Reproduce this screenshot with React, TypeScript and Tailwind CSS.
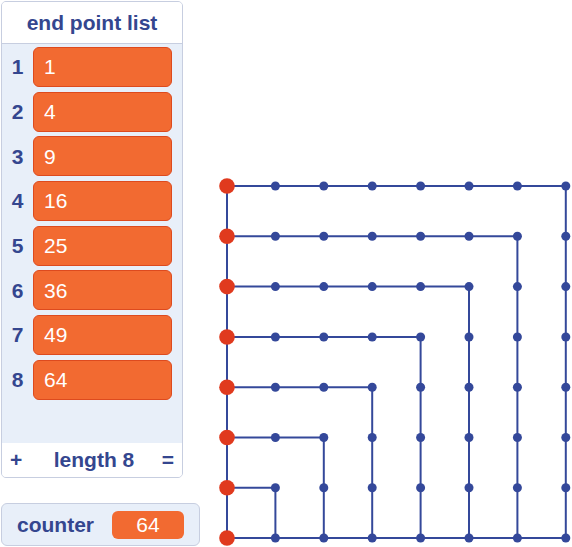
import React from "react";

const values = [1, 4, 9, 16, 25, 36, 49, 64];

// grid coordinates of the end-point diagram (page pixels)
const xs = [227, 275.4, 323.8, 372.2, 420.6, 469, 517.4, 565.8];
const ys = [186, 236.3, 286.6, 337, 387.2, 437.5, 487.8, 538];

function EndPointGrid() {
  const n = xs.length;
  return (
    <svg className="block" width="370" height="547" viewBox="202 0 370 547">
      {/* left spine and bottom edge */}
      <line x1={xs[0]} y1={ys[0]} x2={xs[0]} y2={ys[n - 1]} stroke="#34489a" strokeWidth="2" />
      <line x1={xs[0]} y1={ys[n - 1]} x2={xs[n - 1]} y2={ys[n - 1]} stroke="#34489a" strokeWidth="2" />
      {/* L shapes */}
      {ys.map((y, i) => {
        const xe = xs[n - 1 - i];
        return (
          <g key={i}>
            <line x1={xs[0]} y1={y} x2={xe} y2={y} stroke="#34489a" strokeWidth="2" />
            <line x1={xe} y1={y} x2={xe} y2={ys[n - 1]} stroke="#34489a" strokeWidth="2" />
          </g>
        );
      })}
      {ys.map((y, i) =>
        xs.map((x, j) =>
          j === 0 ? null : <circle key={`${i}-${j}`} cx={x} cy={y} r="4.5" fill="#34489a" />
        )
      )}
      {ys.map((y, i) => (
        <circle key={`r${i}`} cx={xs[0]} cy={y} r="7.8" fill="#e03a1e" />
      ))}
    </svg>
  );
}

export default function App() {
  return (
    <div
      className="w-[572px] h-[547px] bg-white flex overflow-hidden"
      style={{ fontFamily: '"Liberation Sans", Arial, sans-serif' }}
    >
      <div className="w-[202px] flex flex-col pt-[1px] pl-[1px]">
        {/* list monitor */}
        <div className="w-[182px] h-[477px] border border-[#c7cee0] rounded-[5px] overflow-hidden flex flex-col bg-[#e8eff9]">
          <div className="h-[42px] bg-white border-b border-[#c7cee0] flex items-center justify-center text-[21px] font-bold text-[#34468f]">
            end point list
          </div>
          <div className="flex-1 flex flex-col gap-[4.7px] pt-[3px]">
            {values.map((v, i) => (
              <div key={i} className="flex items-center h-[40px]">
                <div className="w-[31px] text-center text-[21px] font-bold text-[#34468f]">{i + 1}</div>
                <div className="w-[139px] h-[40px] bg-[#f26a31] border border-[#dd4a1e] rounded-[6px] flex items-center pl-[10px] text-[21px] text-white">
                  {v}
                </div>
              </div>
            ))}
          </div>
          <div className="h-[34px] bg-white flex items-center justify-between px-[8px] text-[21px] font-bold text-[#34468f]">
            <span>+</span>
            <span className="ml-[4px]">length 8</span>
            <span>=</span>
          </div>
        </div>

        {/* counter monitor */}
        <div className="mt-[25px] w-[199px] h-[43px] border border-[#c7cee0] rounded-[6px] bg-[#e8eff9] flex items-center pl-[15px]">
          <span className="text-[21px] font-bold text-[#34468f]">counter</span>
          <div className="ml-[18px] w-[72px] h-[28px] bg-[#f26a31] rounded-[6px] flex items-center justify-center text-[21px] text-white">
            64
          </div>
        </div>
      </div>

      <EndPointGrid />
    </div>
  );
}
